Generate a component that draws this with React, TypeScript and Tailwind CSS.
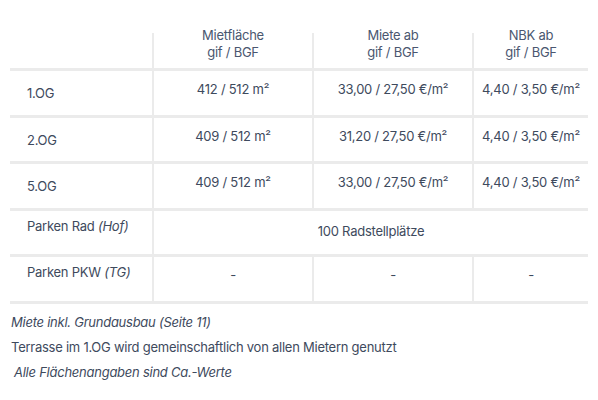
const rows = [
  { label: "1.OG", area: "412 / 512 m²", rent: "33,00 / 27,50 €/m²", nbk: "4,40 / 3,50 €/m²", h: "h-[47px]" },
  { label: "2.OG", area: "409 / 512 m²", rent: "31,20 / 27,50 €/m²", nbk: "4,40 / 3,50 €/m²", h: "h-[46px]" },
  { label: "5.OG", area: "409 / 512 m²", rent: "33,00 / 27,50 €/m²", nbk: "4,40 / 3,50 €/m²", h: "h-[47px]" },
];

export default function App() {
  return (
    <div className="min-h-screen w-[598px] bg-white px-[10px] pt-[33px] text-[13px] tracking-[-0.25px] text-[#3e4a5d] [font-family:Inter,'Liberation_Sans',sans-serif]">
      {/* Header */}
      <div className="grid h-[38px] grid-cols-[142px_160px_160px_116px] border-b-[3px] border-[#ebebeb]">
        <div />
        <div className="border-l-2 border-[#ebebeb] text-center leading-[17px] text-[#4a5770]">
          <div className="-mt-[6px]">
            Mietfläche
            <br />
            gif / BGF
          </div>
        </div>
        <div className="border-l-2 border-[#ebebeb] text-center leading-[17px] text-[#4a5770]">
          <div className="-mt-[6px]">
            Miete ab
            <br />
            gif / BGF
          </div>
        </div>
        <div className="border-l-2 border-[#ebebeb] text-center leading-[17px] text-[#4a5770]">
          <div className="-mt-[6px]">
            NBK ab
            <br />
            gif / BGF
          </div>
        </div>
      </div>

      {/* Floors */}
      {rows.map((r) => (
        <div
          key={r.label}
          className={`grid grid-cols-[142px_160px_160px_116px] border-b-[3px] border-[#ebebeb] leading-[17px] ${r.h}`}
        >
          <div className="flex items-center pl-[17px] pt-[1px]">{r.label}</div>
          <div className="border-l-2 border-[#ebebeb] pt-[10px] text-center">{r.area}</div>
          <div className="border-l-2 border-[#ebebeb] pt-[10px] text-center">{r.rent}</div>
          <div className="border-l-2 border-[#ebebeb] pt-[10px] text-center">{r.nbk}</div>
        </div>
      ))}

      {/* Parken Rad */}
      <div className="grid h-[46px] grid-cols-[142px_436px] border-b-[3px] border-[#ebebeb] leading-[17px]">
        <div className="pl-[17px] pt-[7px]">
          Parken Rad <i>(Hof)</i>
        </div>
        <div className="border-l-2 border-[#ebebeb] pt-[12px] text-center">100 Radstellplätze</div>
      </div>

      {/* Parken PKW */}
      <div className="grid h-[47px] grid-cols-[142px_160px_160px_116px] border-b-[3px] border-[#ebebeb] leading-[17px]">
        <div className="pl-[17px] pt-[7px]">
          Parken PKW <i>(TG)</i>
        </div>
        <div className="border-l-2 border-[#ebebeb] pt-[10px] text-center">-</div>
        <div className="border-l-2 border-[#ebebeb] pt-[10px] text-center">-</div>
        <div className="border-l-2 border-[#ebebeb] pt-[10px] text-center">-</div>
      </div>

      {/* Notes */}
      <div className="mt-[6px] pl-[1px] leading-[25px]">
        <p className="italic">Miete inkl. Grundausbau (Seite 11)</p>
        <p>Terrasse im 1.OG wird gemeinschaftlich von allen Mietern genutzt</p>
        <p className="pl-[3px] italic">Alle Flächenangaben sind Ca.-Werte</p>
      </div>
    </div>
  );
}
